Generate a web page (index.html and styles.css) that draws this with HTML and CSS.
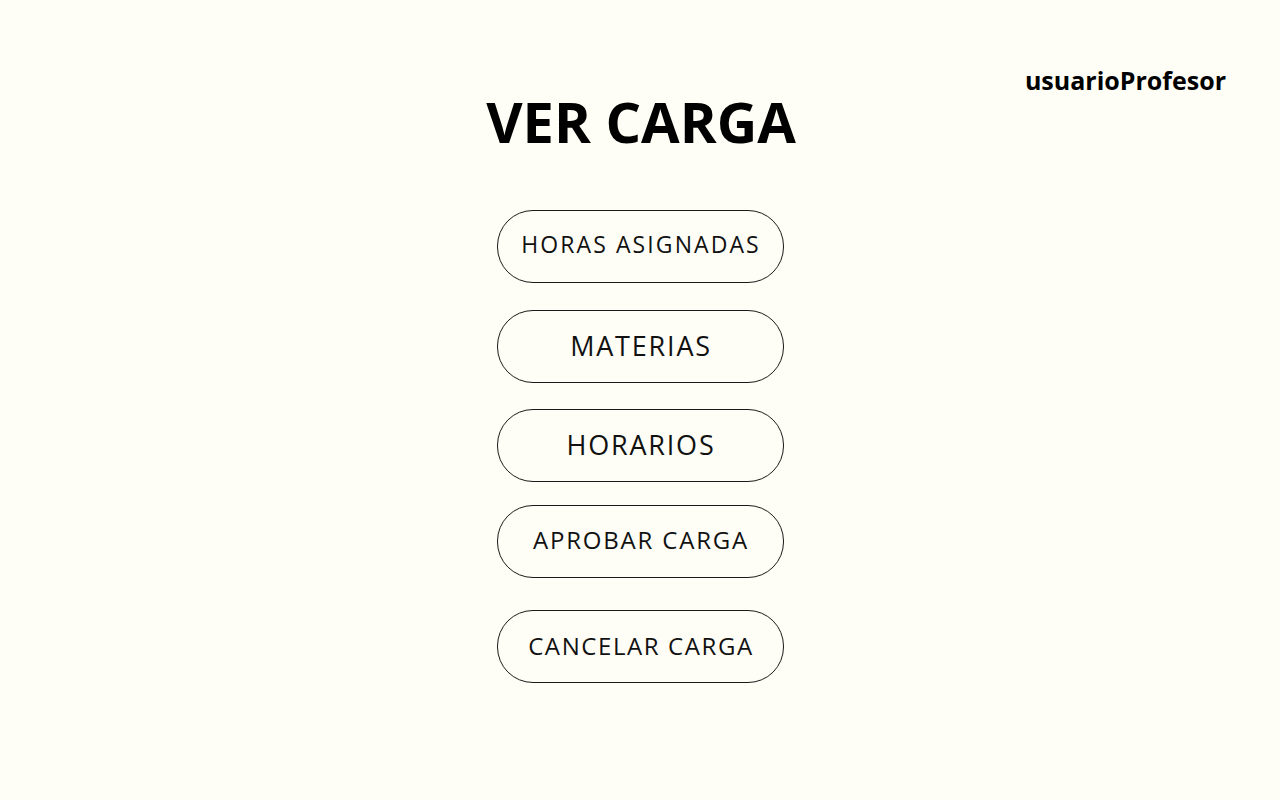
FILE: index.html
```html
<!DOCTYPE html>
<html lang="es">
<head>
<meta charset="utf-8">
<title>Ver carga</title>
<link rel="stylesheet" href="styles.css">
</head>
<body>
<div class="page">
  <header class="top">
    <span class="user">usuarioProfesor</span>
  </header>
  <h1 class="title">VER CARGA</h1>
  <nav class="menu">
    <button class="btn btn-horas">HORAS ASIGNADAS</button>
    <button class="btn btn-materias">MATERIAS</button>
    <button class="btn btn-horarios">HORARIOS</button>
    <button class="btn btn-aprobar">APROBAR CARGA</button>
    <button class="btn btn-cancelar">CANCELAR CARGA</button>
  </nav>
</div>
</body>
</html>
```
FILE: styles.css
```css
html, body {
  margin: 0;
  padding: 0;
  background: #fefef6;
}
body {
  font-family: "Open Sans", "Liberation Sans", sans-serif;
  color: #000;
}
.page {
  width: 1280px;
  height: 800px;
  display: flex;
  flex-direction: column;
  align-items: center;
}
.top {
  align-self: stretch;
  display: flex;
  justify-content: flex-end;
  padding: 66px 54px 0 0;
  height: 28px;
}
.user {
  font-weight: 700;
  font-size: 25px;
  line-height: 28px;
  letter-spacing: 0;
}
.title {
  margin: 0;
  margin-top: -5px;
  font-size: 56px;
  line-height: 64px;
  font-weight: 700;
  letter-spacing: 0;
  padding-left: 2px;
}
.menu {
  display: flex;
  flex-direction: column;
  align-items: center;
  margin-top: 57px;
}
.btn {
  width: 287px;
  height: 73px;
  border: 1px solid #1a1a1a;
  border-radius: 36px;
  background: transparent;
  font-family: inherit;
  color: #111;
  font-weight: 400;
  font-size: 23px;
  letter-spacing: 2px;
  padding: 0 0 2px 2px;
  display: flex;
  align-items: center;
  justify-content: center;
}
.btn-horas { padding-bottom: 6px; letter-spacing: 2.1px; }
.btn-materias { margin-top: 27px; font-size: 27px; letter-spacing: 1.8px; }
.btn-horarios { margin-top: 26px; font-size: 27px; letter-spacing: 1.8px; }
.btn-aprobar { margin-top: 23px; font-size: 24px; padding-bottom: 4px; letter-spacing: 1.8px; }
.btn-cancelar { margin-top: 32px; font-size: 24px; letter-spacing: 1.6px; }
```
